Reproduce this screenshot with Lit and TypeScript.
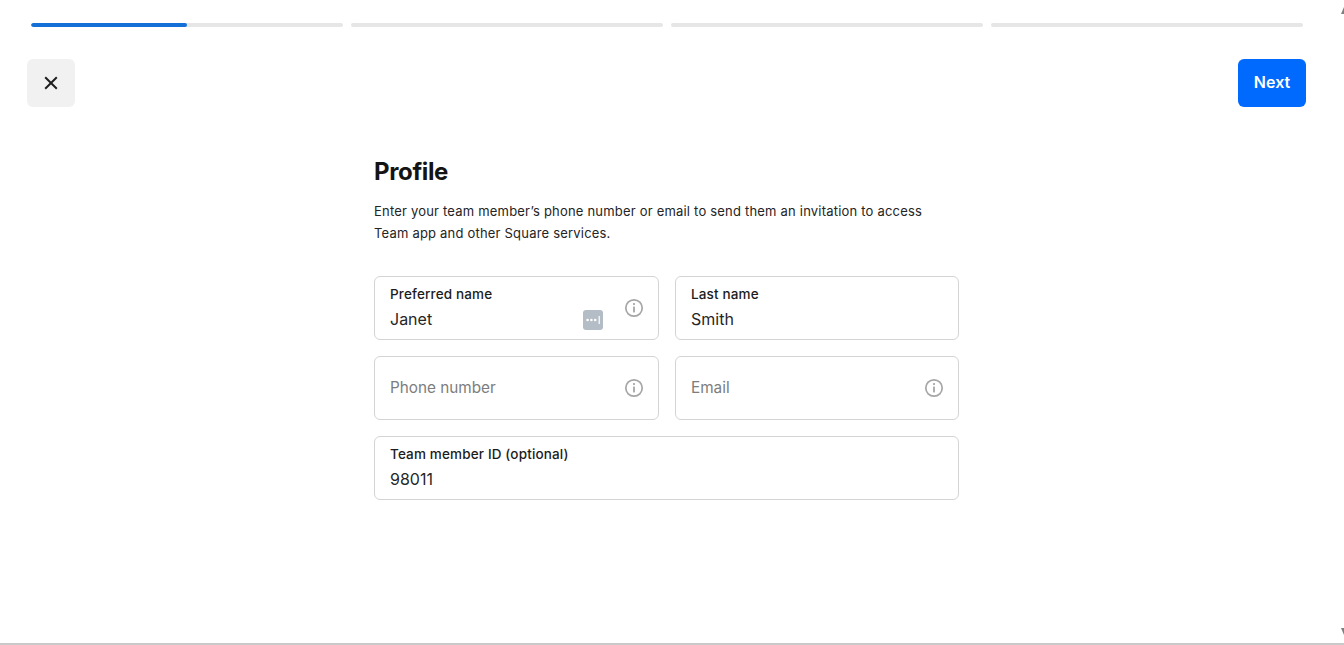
import { LitElement, html, css } from "lit";
import { customElement } from "lit/decorators.js";

const infoIcon = html`<svg class="info" width="20" height="20" viewBox="0 0 20 20" fill="none">
  <circle cx="10" cy="10" r="8.2" stroke="#a6a6a6" stroke-width="1.7"></circle>
  <rect x="9.1" y="8.6" width="1.8" height="5.8" fill="#a6a6a6"></rect>
  <circle cx="10" cy="6.1" r="1.15" fill="#a6a6a6"></circle>
</svg>`;

@customElement("app-root")
export class AppRoot extends LitElement {
  static styles = css`
    :host {
      display: block;
      height: 645px;
      overflow: hidden;
      box-sizing: border-box;
      background: #fff;
      border-bottom: 2px solid #c9c9c9;
      font-family: Inter, "Liberation Sans", sans-serif;
      color: #1a1a1a;
      position: relative;
    }
    .progress {
      display: flex;
      gap: 8px;
      padding: 23px 41.5px 0 31px;
    }
    .seg {
      flex: 1;
      height: 4px;
      border-radius: 2px;
      background: #e6e6e6;
      overflow: hidden;
    }
    .fill {
      height: 100%;
      background: #146fd6;
      border-radius: 2px;
    }
    .toolbar {
      display: flex;
      justify-content: space-between;
      padding: 32px 38px 0 27px;
    }
    button {
      border: 0;
      height: 48px;
      border-radius: 6px;
      font: inherit;
      display: flex;
      align-items: center;
      justify-content: center;
      padding: 0;
    }
    .close {
      width: 48px;
      background: #f1f1f1;
    }
    .next {
      width: 68px;
      background: #006aff;
      color: #fff;
      font-size: 16px;
      font-weight: 600;
      padding-bottom: 2px;
    }
    main {
      width: 585px;
      margin: 47px 0 0 374px;
    }
    h1 {
      margin: 0;
      font-size: 24px;
      line-height: 36px;
      font-weight: 700;
      letter-spacing: -0.35px;
      color: #141414;
    }
    p {
      margin: 10px 0 0;
      width: 560px;
      font-size: 13px;
      line-height: 22px;
      letter-spacing: 0.2px;
      color: #242424;
    }
    .form {
      margin-top: 32px;
      display: grid;
      grid-template-columns: 285px 284px;
      grid-auto-rows: 64px;
      gap: 16px;
    }
    .field {
      box-sizing: border-box;
      border: 1px solid #d4d4d4;
      border-radius: 6px;
      padding: 0 15px;
      display: flex;
      align-items: center;
      position: relative;
      min-width: 0;
    }
    .wide {
      grid-column: 1 / -1;
    }
    .text {
      flex: 1;
      min-width: 0;
    }
    .entry {
      padding-bottom: 2px;
    }
    .label {
      font-size: 13.5px;
      line-height: 18px;
      font-weight: 500;
      letter-spacing: 0.15px;
      color: #1c1c1c;
    }
    .value {
      font-size: 16px;
      line-height: 22px;
      margin-top: 5px;
      color: #262626;
    }
    .placeholder {
      font-size: 15.3px;
      line-height: 22px;
      color: #7d7d7d;
      padding-bottom: 1px;
    }
    .info {
      flex: none;
      margin-right: -1px;
    }
    .top {
      align-self: flex-start;
      margin-top: 21px;
    }
    .dots {
      position: absolute;
      left: 208px;
      top: 33px;
    }
    .scroll {
      position: absolute;
      right: 0;
      width: 0;
      height: 0;
      border-left: 3px solid transparent;
    }
    .scroll.up {
      top: 7px;
      border-bottom: 7px solid #7f7f7f;
    }
    .scroll.down {
      bottom: 8px;
      border-top: 7px solid #7f7f7f;
    }
  `;

  render() {
    return html`
      <div class="progress">
        <div class="seg"><div class="fill" style="width: 50%"></div></div>
        <div class="seg"></div>
        <div class="seg"></div>
        <div class="seg"></div>
      </div>
      <div class="toolbar">
        <button class="close" aria-label="Close">
          <svg width="14" height="14" viewBox="0 0 14 14" fill="none">
            <path d="M1.2 1.2 12.8 12.8M12.8 1.2 1.2 12.8" stroke="#1f1f1f" stroke-width="2"></path>
          </svg>
        </button>
        <button class="next">Next</button>
      </div>
      <main>
        <h1>Profile</h1>
        <p>Enter your team member’s phone number or email to send them an invitation to access Team app and other Square services.</p>
        <div class="form">
          <div class="field">
            <div class="text entry">
              <div class="label">Preferred name</div>
              <div class="value">Janet</div>
            </div>
            <svg class="dots" width="20" height="20" viewBox="0 0 20 20">
              <rect width="20" height="20" rx="3" fill="#b4bcc6"></rect>
              <circle cx="4.6" cy="10" r="1.3" fill="#fff"></circle>
              <circle cx="8.4" cy="10" r="1.3" fill="#fff"></circle>
              <circle cx="12.2" cy="10" r="1.3" fill="#fff"></circle>
              <rect x="15.6" y="6" width="1.2" height="8" fill="#fff"></rect>
            </svg>
            <span class="top">${infoIcon}</span>
          </div>
          <div class="field">
            <div class="text entry">
              <div class="label">Last name</div>
              <div class="value">Smith</div>
            </div>
          </div>
          <div class="field">
            <div class="text placeholder">Phone number</div>
            ${infoIcon}
          </div>
          <div class="field">
            <div class="text placeholder">Email</div>
            ${infoIcon}
          </div>
          <div class="field wide">
            <div class="text entry">
              <div class="label">Team member ID (optional)</div>
              <div class="value">98011</div>
            </div>
          </div>
        </div>
      </main>
      <div class="scroll up"></div>
      <div class="scroll down"></div>
    `;
  }
}
